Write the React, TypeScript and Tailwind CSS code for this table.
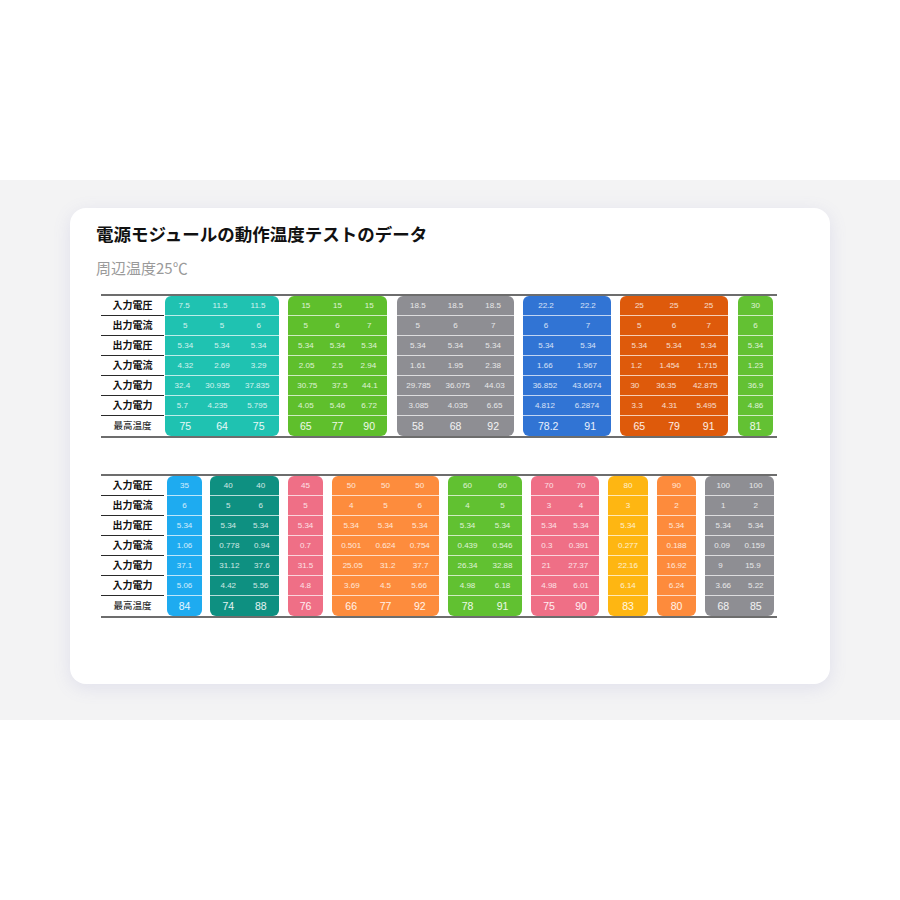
import React from "react";

type Block = { cls: string; rows: string[][] };

const LABELS = ["入力電圧", "出力電流", "出力電圧", "入力電流", "入力電力", "入力電力", "最高温度"];

const T1: Block[] = [
  {
    cls: "bg-[#1fc2b1] w-[114px] ml-[1px]",
    rows: [
      ["7.5", "11.5", "11.5"],
      ["5", "5", "6"],
      ["5.34", "5.34", "5.34"],
      ["4.32", "2.69", "3.29"],
      ["32.4", "30.935", "37.835"],
      ["5.7", "4.235", "5.795"],
      ["75", "64", "75"],
    ],
  },
  {
    cls: "bg-[#5fbf2c] w-[99px] ml-[9px]",
    rows: [
      ["15", "15", "15"],
      ["5", "6", "7"],
      ["5.34", "5.34", "5.34"],
      ["2.05", "2.5", "2.94"],
      ["30.75", "37.5", "44.1"],
      ["4.05", "5.46", "6.72"],
      ["65", "77", "90"],
    ],
  },
  {
    cls: "bg-[#8e8e93] w-[117px] ml-[10px]",
    rows: [
      ["18.5", "18.5", "18.5"],
      ["5", "6", "7"],
      ["5.34", "5.34", "5.34"],
      ["1.61", "1.95", "2.38"],
      ["29.785", "36.075", "44.03"],
      ["3.085", "4.035", "6.65"],
      ["58", "68", "92"],
    ],
  },
  {
    cls: "bg-[#3174d4] w-[88px] ml-[9px]",
    rows: [
      ["22.2", "22.2"],
      ["6", "7"],
      ["5.34", "5.34"],
      ["1.66", "1.967"],
      ["36.852", "43.6674"],
      ["4.812", "6.2874"],
      ["78.2", "91"],
    ],
  },
  {
    cls: "bg-[#de5a0b] w-[108px] ml-[9px]",
    rows: [
      ["25", "25", "25"],
      ["5", "6", "7"],
      ["5.34", "5.34", "5.34"],
      ["1.2", "1.454", "1.715"],
      ["30", "36.35", "42.875"],
      ["3.3", "4.31", "5.495"],
      ["65", "79", "91"],
    ],
  },
  {
    cls: "bg-[#63c133] w-[35px] ml-[10px]",
    rows: [["30"], ["6"], ["5.34"], ["1.23"], ["36.9"], ["4.86"], ["81"]],
  },
];

const T2: Block[] = [
  {
    cls: "bg-[#1eabf0] w-[35px] ml-[3px]",
    rows: [["35"], ["6"], ["5.34"], ["1.06"], ["37.1"], ["5.06"], ["84"]],
  },
  {
    cls: "bg-[#0e9081] w-[69px] ml-[8px]",
    rows: [
      ["40", "40"],
      ["5", "6"],
      ["5.34", "5.34"],
      ["0.778", "0.94"],
      ["31.12", "37.6"],
      ["4.42", "5.56"],
      ["74", "88"],
    ],
  },
  {
    cls: "bg-[#ef6f86] w-[35px] ml-[9px]",
    rows: [["45"], ["5"], ["5.34"], ["0.7"], ["31.5"], ["4.8"], ["76"]],
  },
  {
    cls: "bg-[#fd8c3d] w-[107px] ml-[9px]",
    rows: [
      ["50", "50", "50"],
      ["4", "5", "6"],
      ["5.34", "5.34", "5.34"],
      ["0.501", "0.624", "0.754"],
      ["25.05", "31.2", "37.7"],
      ["3.69", "4.5", "5.66"],
      ["66", "77", "92"],
    ],
  },
  {
    cls: "bg-[#61c131] w-[74px] ml-[9px]",
    rows: [
      ["60", "60"],
      ["4", "5"],
      ["5.34", "5.34"],
      ["0.439", "0.546"],
      ["26.34", "32.88"],
      ["4.98", "6.18"],
      ["78", "91"],
    ],
  },
  {
    cls: "bg-[#ef6f86] w-[68px] ml-[9px]",
    rows: [
      ["70", "70"],
      ["3", "4"],
      ["5.34", "5.34"],
      ["0.3", "0.391"],
      ["21", "27.37"],
      ["4.98", "6.01"],
      ["75", "90"],
    ],
  },
  {
    cls: "bg-[#feb612] w-[40px] ml-[9px]",
    rows: [["80"], ["3"], ["5.34"], ["0.277"], ["22.16"], ["6.14"], ["83"]],
  },
  {
    cls: "bg-[#fd8b3c] w-[39px] ml-[9px]",
    rows: [["90"], ["2"], ["5.34"], ["0.188"], ["16.92"], ["6.24"], ["80"]],
  },
  {
    cls: "bg-[#8e8e93] w-[69px] ml-[9px]",
    rows: [
      ["100", "100"],
      ["1", "2"],
      ["5.34", "5.34"],
      ["0.09", "0.159"],
      ["9", "15.9"],
      ["3.66", "5.22"],
      ["68", "85"],
    ],
  },
];

function BlockView({ b }: { b: Block }) {
  return (
    <div className={`${b.cls} rounded-[6px] overflow-hidden flex flex-col`}>
      {b.rows.map((r, i) => {
        const last = i === b.rows.length - 1;
        return (
          <div
            key={i}
            className={`h-[20px] flex items-center justify-around px-[2px] ${
              last ? "" : "border-b border-white/70"
            }`}
          >
            {r.map((v, j) => (
              <span
                key={j}
                className={
                  last
                    ? "text-[10.5px] font-medium text-white/90 leading-none"
                    : "text-[8px] text-white/80 leading-none"
                }
              >
                {v}
              </span>
            ))}
          </div>
        );
      })}
    </div>
  );
}

function Table({ blocks }: { blocks: Block[] }) {
  return (
    <div className="w-[676px] border-t-2 border-b-2 border-[#6d6d6d] flex items-stretch">
      <div className="w-[63px] flex flex-col">
        {LABELS.map((l, i) => (
          <div
            key={i}
            className={`h-[20px] flex items-center justify-center ${
              i === LABELS.length - 1 ? "" : "border-b border-[#2a2a2a]"
            } ${i === LABELS.length - 1 ? "font-medium text-[9.5px] text-[#333]" : "font-bold text-[10px] text-[#111]"}`}
          >
            {l}
          </div>
        ))}
      </div>
      {blocks.map((b, i) => (
        <BlockView key={i} b={b} />
      ))}
    </div>
  );
}

export default function App() {
  return (
    <div
      className="w-[900px] h-[900px] bg-white flex flex-col"
      style={{ fontFamily: '"Liberation Sans", "Noto Sans CJK JP", sans-serif' }}
    >
      <div className="h-[180px]" />
      <div className="h-[540px] bg-[#f3f3f4] pt-[28px] px-[70px]">
        <div className="h-[476px] bg-white rounded-[16px] shadow-[0_4px_18px_rgba(110,110,190,0.14)] pl-[26px] pt-[13px]">
          <h1
            className="text-[17.5px] font-bold text-[#111] leading-[26px]"
            style={{ fontFamily: '"Noto Sans CJK JP", sans-serif' }}
          >
            電源モジュールの動作温度テストのデータ
          </h1>
          <div
            className="mt-[11px] text-[15px] text-[#9a9a9a] leading-[20px]"
            style={{ fontFamily: '"Noto Sans CJK JP", sans-serif' }}
          >
            周辺温度25℃
          </div>
          <div className="mt-[16px] ml-[5px]" style={{ fontFamily: '"Liberation Sans", "Noto Sans CJK JP", sans-serif' }}>
            <Table blocks={T1} />
            <div className="h-[36px]" />
            <Table blocks={T2} />
          </div>
        </div>
      </div>
    </div>
  );
}
